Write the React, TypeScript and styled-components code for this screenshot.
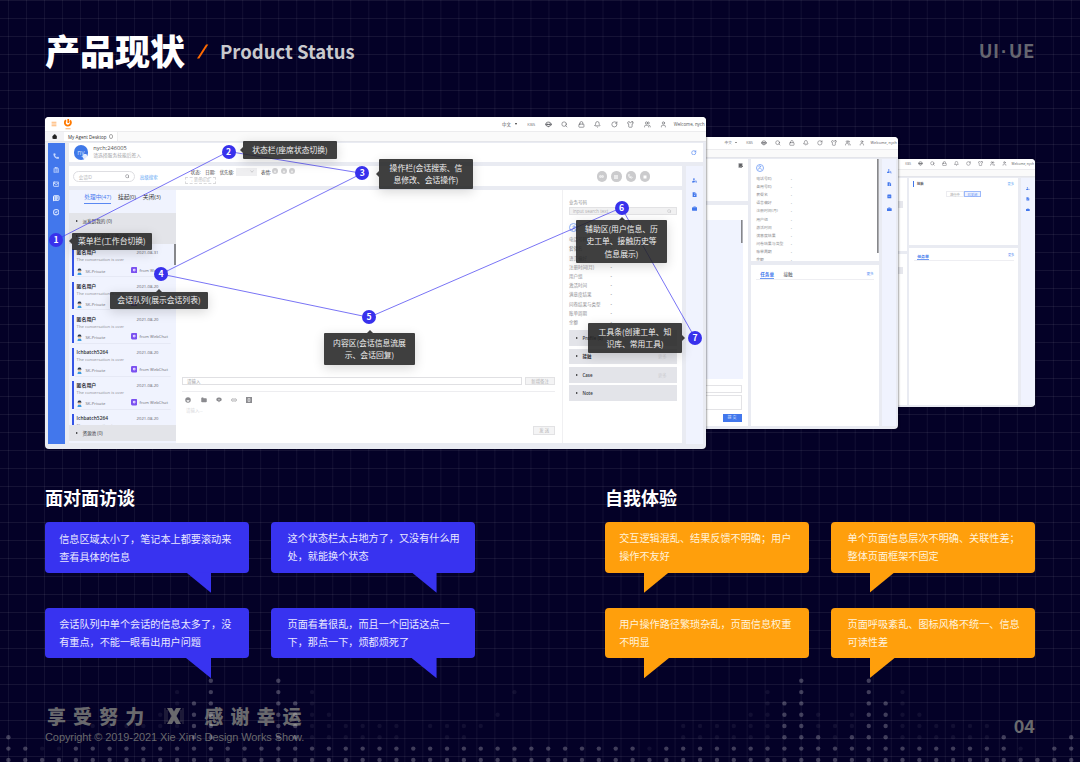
import React from "react";
import styled, { createGlobalStyle, css } from "styled-components";
import {
  Bell,
  CircleCheck,
  ClipboardList,
  Folder,
  House,
  Link2,
  Lock,
  Mail,
  Menu,
  MessageSquareText,
  Phone,
  RotateCw,
  Search,
  Shirt,
  User,
  Users,
} from "lucide-react";

const cjk = `"Noto Sans CJK SC", sans-serif`;
const ui = `"Open Sans", "Noto Sans CJK SC", sans-serif`;

const GlobalStyle = createGlobalStyle`
  * {
    box-sizing: border-box;
  }
  body {
    margin: 0;
    background: #040127;
  }
`;

const Page = styled.main`
  position: relative;
  display: flex;
  flex-direction: column;
  width: 1080px;
  height: 762px;
  padding: 0 45px;
  overflow: hidden;
  font-family: ${cjk};
  background-color: #040127;
  background-image: linear-gradient(rgba(255, 255, 255, 0.07) 1px, transparent 1px),
    linear-gradient(90deg, rgba(255, 255, 255, 0.06) 1px, transparent 1px);
  background-size: 18.02px 18px;
  background-position: 8px 0;
`;

const DotLayer = styled.svg`
  position: absolute;
  left: 0;
  top: 0;
  pointer-events: none;
`;

/* ---------- header ---------- */

const Header = styled.header`
  display: flex;
  align-items: center;
  height: 117px;
  padding-bottom: 14px;
`;

const Title = styled.h1`
  margin: -3px 0 0;
  width: 152px;
  font-size: 35px;
  line-height: 50px;
  font-weight: 900;
  color: #fff;
  white-space: nowrap;
`;

const Slash = styled.svg`
  margin-right: 11px;
`;

const SubTitle = styled.span`
  flex: 1;
  margin-top: -2px;
  font-size: 18.5px;
  font-weight: 700;
  color: #c9c9cd;
`;

const Brand = styled.span`
  margin-top: -3px;
  font-size: 18.5px;
  font-weight: 700;
  color: #666670;
  letter-spacing: 0.5px;
  i {
    margin: 0 1.2px;
    font-family: "Liberation Sans", sans-serif;
    font-style: normal;
  }
`;

/* ---------- mock windows ---------- */

const Stage = styled.section`
  position: relative;
  height: 332px;
`;

const Windows = styled.div`
  display: flex;
  align-items: center;
  height: 332px;
  font-family: ${ui};
`;

const Window = styled.div<{ $w: number; $h: number; $left?: boolean; $z: number }>`
  position: relative;
  z-index: ${(p) => p.$z};
  flex: none;
  display: flex;
  flex-direction: column;
  width: ${(p) => p.$w}px;
  height: ${(p) => p.$h}px;
  overflow: hidden;
  border-radius: ${(p) => (p.$left ? "4px" : "0 4px 4px 0")};
  background: #e9ebf2;
  box-shadow: 1px 0 2px rgba(0, 0, 0, 0.35);
`;

const TopBar = styled.div<{ $h: number }>`
  flex: none;
  display: flex;
  align-items: center;
  justify-content: space-between;
  height: ${(p) => p.$h}px;
  background: #fff;
`;

const TopIcons = styled.div<{ $s: number }>`
  display: flex;
  align-items: center;
  margin-left: auto;
  margin-right: ${(p) => 1.6 * p.$s}px;
  font-size: ${(p) => 4.4 * p.$s}px;
  color: #55565c;
  white-space: nowrap;
  svg {
    flex: none;
    display: block;
    width: ${(p) => 6.8 * p.$s}px;
    height: ${(p) => 6.8 * p.$s}px;
    margin-right: ${(p) => 9.7 * p.$s}px;
  }
`;

const Lang = styled.span<{ $s: number }>`
  display: flex;
  align-items: center;
  gap: ${(p) => 4 * p.$s}px;
  margin-right: ${(p) => 10.5 * p.$s}px;
  &::after {
    content: "";
    border: ${(p) => 1.6 * p.$s}px solid transparent;
    border-top: ${(p) => 2.2 * p.$s}px solid #333;
    border-bottom: 0;
  }
`;

const Kbs = styled.span<{ $s: number }>`
  width: ${(p) => 17.5 * p.$s}px;
  color: #77787d;
  font-size: ${(p) => 4.3 * p.$s}px;
`;

const Welcome = styled.span<{ $s: number }>`
  width: ${(p) => 31 * p.$s}px;
  margin-left: ${(p) => -3 * p.$s}px;
`;

const TabBar = styled.div<{ $h: number }>`
  flex: none;
  display: flex;
  height: ${(p) => p.$h}px;
  background: #fafafa;
  border-top: 0.5px solid #ececee;
  border-bottom: 1px solid #e4e5ea;
`;

const HomeTab = styled.div`
  display: flex;
  align-items: center;
  justify-content: center;
  width: 18.5px;
  background: #f3f3f6;
`;

const Tab = styled.div`
  display: flex;
  align-items: center;
  justify-content: space-between;
  width: 54.5px;
  padding: 0 4px 0 4.5px;
  background: #fff;
  border-right: 1px solid #eee;
  font-size: 4.55px;
  color: #333;
  white-space: nowrap;
`;

const Ring = styled.i`
  width: 4.4px;
  height: 4.4px;
  border: 0.6px solid #aaa;
  border-radius: 50%;
`;

const Logo = styled.div`
  display: flex;
  align-items: center;
  gap: 7.5px;
  padding-left: 5.5px;
`;

const Desk = styled.div`
  flex: 1;
  min-height: 0;
  display: grid;
  grid-template-columns: 16.5px 613.3px 16.3px;
  grid-template-rows: 19.6px 19.6px minmax(0, 1fr);
  column-gap: 4.3px;
  row-gap: 4px;
  padding: 1px 3px 4.5px 3px;
`;

const NavRail = styled.nav`
  grid-row: 1 / 4;
  display: flex;
  flex-direction: column;
  align-items: center;
  gap: 7.7px;
  padding-top: 10px;
  background: #4277ec;
  color: #cddcff;
`;

const Card = styled.div`
  background: #fff;
`;

const AgentCard = styled(Card)`
  grid-column: 2 / 4;
  display: flex;
  align-items: center;
  padding: 0 6px 0 5px;
`;

const Avatar = styled.span`
  display: flex;
  align-items: center;
  justify-content: center;
  width: 14.4px;
  height: 14.4px;
  margin-right: 5px;
  border-radius: 50%;
  background: radial-gradient(circle at 11px 11.5px, #e3ebff 0 2.3px, #3f78e8 2.8px);
  color: #cfe0ff;
  font-size: 6.5px;
`;

const AgentText = styled.div`
  flex: 1;
  display: flex;
  flex-direction: column;
  font-size: 5.7px;
  line-height: 7px;
  color: #555;
  small {
    font-size: 4.8px;
    color: #a2a2a6;
  }
`;

const FilterCard = styled(Card)`
  display: flex;
  align-items: center;
  padding: 1px 0 0 4px;
  font-size: 4.4px;
  line-height: 6px;
  color: #444;
`;

const SearchPill = styled.div`
  display: flex;
  align-items: center;
  justify-content: space-between;
  width: 62.5px;
  height: 11.5px;
  padding: 0 5px;
  border: 0.6px solid #dedee2;
  border-radius: 6px;
  color: #b5b5b8;
`;

const BlueLink = styled.span<{ $size?: number }>`
  color: #63a8f5;
  font-size: ${(p) => p.$size || 4.5}px;
`;

const SearchMore = styled(BlueLink)`
  margin-left: 4.5px;
`;

const Filters = styled.div`
  display: flex;
  flex-direction: column;
  gap: 1px;
  width: 412px;
  margin: -1.5px 0 0 27px;
`;

const FilterLine = styled.div`
  display: flex;
  align-items: center;
  gap: 4.5px;
  height: 8px;
  padding-left: 6px;
`;

const FakeSelect = styled.i`
  display: flex;
  align-items: center;
  justify-content: flex-end;
  width: 21px;
  height: 8px;
  margin: 0 0 0 -3px;
  padding-right: 3px;
  background: #efeff1;
`;

const Smileys = styled.span`
  display: flex;
  gap: 2.2px;
  margin: -2px 0 0 -3px;
  i {
    width: 6px;
    height: 6px;
    border-radius: 50%;
    background: radial-gradient(circle at 3px 3.6px, #ececec 0.8px, #cfcfd1 1.4px);
  }
`;

const AddTag = styled.span`
  width: 31px;
  height: 6.8px;
  border: 0.6px dashed #dadadc;
  color: #c3c3c5;
  font-size: 4px;
  line-height: 5.5px;
  text-align: center;
`;

const RoundButtons = styled.div`
  display: flex;
  gap: 4px;
  i {
    display: flex;
    align-items: center;
    justify-content: center;
    width: 10.4px;
    height: 10.4px;
    border-radius: 50%;
    background: #cbcbcd;
    color: #fff;
  }
`;

const ToolRail = styled.div<{ $s: number; $gap: number }>`
  display: flex;
  flex-direction: column;
  align-items: center;
  gap: ${(p) => p.$gap}px;
  padding-top: ${(p) => 11.5 * p.$s}px;
  background: #f0f3fe;
  svg {
    flex: none;
    width: ${(p) => 5.2 * p.$s}px;
    height: ${(p) => 5.2 * p.$s}px;
  }
`;

const MainToolRail = styled(ToolRail)`
  grid-row: 2 / 4;
  grid-column: 3;
`;

const Workspace = styled.div`
  grid-column: 2;
  display: grid;
  grid-template-columns: 107.3px 387px 1fr;
  min-height: 0;
  background: #fff;
  margin-bottom: 1.5px;
`;

const Queue = styled.div`
  display: flex;
  flex-direction: column;
  min-height: 0;
  padding-bottom: 2.2px;
  background: #f0f3fe;
`;

const QueueTabs = styled.div`
  flex: none;
  display: flex;
  gap: 6.8px;
  height: 23px;
  padding: 4px 0 0 15.5px;
  font-size: 5.7px;
  line-height: 7.4px;
  color: #333;
  white-space: nowrap;
  span {
    height: 10.6px;
  }
  span:first-child {
    color: #4a7cf0;
    border-bottom: 1px solid #5a88f2;
  }
`;

const Group = styled.div`
  flex: none;
  display: flex;
  align-items: center;
  gap: 4.6px;
  height: 15.6px;
  padding-left: 7px;
  background: #e3e4e9;
  color: #37383d;
  font-size: 4.6px;
  &::before {
    content: "";
    border: 1.3px solid transparent;
    border-left: 2.1px solid #222;
    border-right: 0;
  }
`;

const QueueList = styled.div`
  flex: 1;
  min-height: 0;
  overflow: hidden;
  padding-top: 4.8px;
  background: linear-gradient(#86878b, #86878b) no-repeat right 0 top 0 / 2px 21px;
`;

const Chat = styled.div`
  display: grid;
  grid-template-columns: 54.5px 1fr;
  grid-template-rows: 7px 7px 1fr;
  height: 27.5px;
  margin: 0 2px 5.6px 3px;
  padding: 0.6px 0 0 2.8px;
  border-left: 2px solid #3454e6;
  box-shadow: 0 4px 0 -3.4px #dfe3ee;
  font-size: 4.2px;
  line-height: 7px;
  color: #8b8c93;
  white-space: nowrap;
  b {
    font-size: 4.9px;
    font-weight: 600;
    color: #2e2f35;
  }
  time {
    padding-left: 5.5px;
    color: #606168;
  }
  p {
    grid-column: 1 / 3;
    margin: 0;
  }
  span {
    display: flex;
    align-items: center;
    gap: 2px;
    padding-top: 0.5px;
    color: #6f7077;
  }
  span:nth-of-type(1) {
    gap: 2.8px;
    padding-top: 2.5px;
  }
`;

const Conversation = styled.div`
  display: flex;
  flex-direction: column;
  justify-content: flex-end;
  padding: 0 7px 8px 6px;
  border-right: 1px solid #f0f0f2;
  font-size: 4.4px;
  line-height: 7px;
  color: #a5a5a8;
`;

const NoteLine = styled.div`
  display: grid;
  grid-template-columns: 1fr 30px;
  gap: 3px;
  padding-bottom: 6px;
  border-bottom: 0.6px solid #ededf0;
  div {
    height: 8.4px;
    padding-left: 4px;
    border: 0.6px solid #e0e0e3;
  }
`;

const GreyButton = styled.span<{ $w?: number }>`
  align-self: flex-end;
  width: ${(p) => p.$w || 30}px;
  height: 8.4px;
  border: 0.6px solid #e2e2e4;
  background: #f4f4f5;
  color: #b4b4b7;
  text-align: center;
`;

const EditorIcons = styled.div`
  display: flex;
  gap: 9.2px;
  padding: 4.5px 0 4.5px 3.3px;
  color: #8b8b8f;
`;

const Placeholder = styled.div`
  height: 19.4px;
  padding-left: 4px;
  color: #dadadd;
`;

const Aside = styled.aside`
  display: flex;
  flex-direction: column;
  padding: 8.5px 5.4px 0 5.8px;
  font-size: 4.5px;
  line-height: 8px;
  color: #8f8f93;
`;

const AsideSearch = styled.div`
  flex: none;
  display: flex;
  align-items: center;
  justify-content: space-between;
  height: 8px;
  margin: 0.5px 0 8px;
  padding: 0 4px 0 3px;
  border: 0.6px solid #e2e2e4;
  background: #f1f1f2;
  color: #b0b0b3;
`;

const Fields = styled.dl<{ $row: number; $label: number }>`
  display: grid;
  grid-template-columns: ${(p) => p.$label}px 1fr;
  grid-auto-rows: ${(p) => p.$row}px;
  margin: 2.8px 0 0;
  line-height: ${(p) => p.$row}px;
  white-space: nowrap;
  dt,
  dd {
    margin: 0;
  }
  dd {
    color: #444;
  }
`;

const Folds = styled.div`
  display: flex;
  flex-direction: column;
  gap: 2.7px;
  margin-top: 3px;
  ${Group} {
    font-weight: 600;
    font-size: 4.4px;
  }
`;

const MoreText = styled.span`
  margin-left: auto;
  padding-right: 10px;
  font-weight: 400;
  color: #ceced2;
`;

const Person = styled.i<{ $d: number }>`
  flex: none;
  display: flex;
  align-items: center;
  justify-content: center;
  width: ${(p) => p.$d}px;
  height: ${(p) => p.$d}px;
  border: 0.6px solid #8db0f8;
  border-radius: 50%;
  color: #6e9bf5;
`;

/* window behind, middle */

const MidBody = styled.div`
  flex: 1;
  min-height: 0;
  display: grid;
  grid-template-columns: 41.3px 127.6px 14px;
  column-gap: 3.6px;
  padding: 1px 0 3.5px;
`;

const Column = styled.div<{ $rows: string; $gap: number }>`
  display: grid;
  grid-template-rows: ${(p) => p.$rows};
  grid-template-columns: minmax(0, 1fr);
  gap: ${(p) => p.$gap}px;
  min-height: 0;
`;

const GridCard = styled(Card)`
  display: flex;
  justify-content: flex-end;
  padding: 4.5px 5px 0 0;
`;

const FormCard = styled(Card)`
  display: flex;
  flex-direction: column;
  padding: 15.5px 5px 4px 0;
`;

const BlueArea = styled.div`
  height: 158.5px;
  background: linear-gradient(#86878b, #86878b) no-repeat right 0 top 0 / 1.6px 23px, #f0f3fe;
`;

const FieldBox = styled.div<{ $h: number; $mt: number }>`
  height: ${(p) => p.$h}px;
  margin: ${(p) => p.$mt}px 1px 0 0;
  border: 0.7px solid #e3e3e6;
  border-left: 0;
`;

const Submit = styled.span`
  align-self: flex-end;
  width: 19px;
  height: 8px;
  margin: 4px 1px 0 0;
  background: #4277ec;
  color: #dfe8ff;
  font-size: 4px;
  line-height: 8px;
  text-align: center;
`;

const InfoCard = styled(Card)`
  overflow: hidden;
  padding: 5.2px 5px 0;
  font-size: 3.9px;
  color: #8f8f93;
  background: linear-gradient(#86878b, #86878b) no-repeat right 0 top 0 / 1.7px 94px, #fff;
`;

const TaskCard = styled(Card)<{ $s: number }>`
  padding: ${(p) => 5 * p.$s}px ${(p) => 5 * p.$s}px 0;
`;

const TaskTabs = styled.div<{ $s: number }>`
  display: flex;
  gap: ${(p) => 9.5 * p.$s}px;
  height: ${(p) => 10 * p.$s}px;
  padding: 0 0 0 ${(p) => 4 * p.$s}px;
  border-bottom: 0.6px solid #eeeef2;
  font-size: ${(p) => 4.6 * p.$s}px;
  line-height: ${(p) => 8.5 * p.$s}px;
  color: #55565c;
  b {
    color: #4277ec;
    border-bottom: 1px solid #6f9af5;
  }
  em {
    margin-left: auto;
    font-style: normal;
    font-size: 0.8em;
    line-height: ${(p) => 7 * p.$s}px;
    color: #5d8ff3;
  }
`;

/* window behind, far right */

const FarBody = styled.div`
  flex: 1;
  min-height: 0;
  display: grid;
  grid-template-columns: 8.6px 109px 14px;
  column-gap: 2.6px;
  padding: 1.5px 0 2px;
`;

const Chip = styled.i<{ $top: number }>`
  display: block;
  width: 4.3px;
  height: 7px;
  margin-top: ${(p) => p.$top}px;
  background: #e6e7ed;
`;

const ContactCard = styled(Card)`
  padding: 3px 4.5px 0 4px;
  font-size: 3.3px;
  line-height: 6px;
  color: #55565c;
`;

const ContactHead = styled.div`
  display: flex;
  justify-content: space-between;
  b {
    padding-left: 2.4px;
    border-left: 0.8px solid #4277ec;
  }
`;

const Segments = styled.div`
  display: flex;
  justify-content: center;
  margin: 3.5px 0 0 0;
  span {
    width: 17.5px;
    height: 6.5px;
    border: 0.6px solid #ececf0;
    text-align: center;
    line-height: 5px;
    color: #999;
  }
  span:last-child {
    border-color: #9bb8fa;
    background: #edf2ff;
    color: #5d8ff3;
  }
`;

/* ---------- annotations over the windows ---------- */

const Lines = styled.svg`
  position: absolute;
  z-index: 5;
  left: 0;
  top: 0;
`;

const Marker = styled.span<{ $x: number; $y: number }>`
  position: absolute;
  z-index: 7;
  left: ${(p) => p.$x - 7}px;
  top: ${(p) => p.$y - 7}px;
  width: 14px;
  height: 14px;
  border-radius: 50%;
  background: #3831ec;
  color: #fff;
  font-size: 8.6px;
  font-weight: 700;
  line-height: 13.4px;
  text-align: center;
`;

type Side = "left" | "right" | "top";

const arrows = {
  left: css`
    left: -3px;
    top: 50%;
    margin-top: -3px;
    border-right-color: rgba(34, 34, 34, 0.87);
    border-left-width: 0;
  `,
  right: css`
    right: -3px;
    top: 50%;
    margin-top: -3px;
    border-left-color: rgba(34, 34, 34, 0.87);
    border-right-width: 0;
  `,
  top: css`
    left: 50%;
    top: -3px;
    margin-left: -3px;
    border-bottom-color: rgba(34, 34, 34, 0.87);
    border-top-width: 0;
  `,
};

const Tip = styled.div<{ $x: number; $y: number; $w: number; $h: number; $side: Side }>`
  position: absolute;
  z-index: 6;
  left: ${(p) => p.$x}px;
  top: ${(p) => p.$y}px;
  width: ${(p) => p.$w}px;
  height: ${(p) => p.$h}px;
  display: flex;
  flex-direction: column;
  align-items: center;
  justify-content: center;
  border-radius: 1px;
  background: rgba(34, 34, 34, 0.87);
  box-shadow: 0 3px 12px rgba(0, 0, 0, 0.16);
  color: #efefef;
  font-size: 7.8px;
  line-height: 12.4px;
  white-space: nowrap;
  &::after {
    content: "";
    position: absolute;
    border: 3px solid transparent;
    ${(p) => arrows[p.$side]}
  }
`;

/* ---------- findings ---------- */

const Findings = styled.div`
  display: flex;
  gap: 130px;
  padding-top: 35px;
`;

const FindingGroup = styled.section`
  width: 430px;
`;

const GroupTitle = styled.h2`
  margin: 0 0 12.3px;
  font-size: 18px;
  line-height: 26px;
  font-weight: 700;
  color: #fff;
`;

const Bubbles = styled.div`
  display: grid;
  grid-template-columns: 204.2px 204.2px;
  column-gap: 21.4px;
  row-gap: 35px;
`;

const Bubble = styled.p<{ $tone: "blue" | "orange"; $x?: number; $y?: number }>`
  position: relative;
  height: 50.6px;
  margin: 0;
  padding: ${(p) => p.$y || 7}px 0 0 ${(p) => p.$x || 14.2}px;
  border-radius: 4px;
  background: ${(p) => (p.$tone === "blue" ? "#3833f0" : "#ff9f0c")};
  color: ${(p) => (p.$tone === "blue" ? "#e9e8ff" : "#fff3dc")};
  font-size: 10.13px;
  line-height: 18.1px;
  white-space: nowrap;
  &::after {
    content: "";
    position: absolute;
    top: 50px;
    left: ${(p) => (p.$tone === "blue" ? 141 : 39)}px;
    width: 25px;
    height: 20.4px;
    background: inherit;
    clip-path: ${(p) =>
      p.$tone === "blue" ? "polygon(0 0, 100% 0, 100% 100%)" : "polygon(0 0, 100% 0, 0 100%)"};
  }
`;

/* ---------- footer ---------- */

const Footer = styled.footer`
  display: flex;
  align-items: center;
  justify-content: space-between;
  margin-top: 45px;
  color: #69696d;
`;

const Motto = styled.div`
  display: flex;
  gap: 20px;
  margin-left: 2px;
  font-size: 19px;
  font-weight: 900;
  line-height: 25px;
  white-space: nowrap;
  span {
    letter-spacing: 7.1px;
    margin-right: -7.1px;
  }
`;

const Cross = styled.svg`
  margin-top: 4.5px;
`;

const Copyright = styled.small`
  display: block;
  margin-top: 2px;
  font-family: "Liberation Sans", sans-serif;
  font-size: 11px;
  line-height: 14px;
  letter-spacing: -0.09px;
`;

const PageNo = styled.span`
  padding-top: 2px;
  font-size: 18px;
  font-weight: 700;
  line-height: 24px;
`;

const range = (a: number, b: number) => Array.from({ length: b - a + 1 }, (_, i) => a + i);

const dotRows = [
  { y: 680.8, on: [12, 16, 47, 51], dim: [] },
  { y: 692.1, on: [12, 16, 47, 51], dim: [10, 18, 30, 45, 53] },
  { y: 703.4, on: [11, 12, 16, 17, 46, 47, 51, 52], dim: [10, 18, 45, 53] },
  { y: 714.7, on: [11, 12, 16, 17, 46, 47, 51, 52], dim: [9, 18, 19, 29, 44, 45, 48, 50, 53, 54] },
  {
    y: 726,
    on: [11, 12, 16, 17, 46, 47, 51, 52],
    dim: [...range(5, 10), ...range(18, 23), ...range(25, 28), ...range(40, 45), 48, 49, 50, ...range(53, 58)],
  },
  {
    y: 737.3,
    on: [0, 11, 12, 16, 17, 46, 47, 48, 50, 51, 52, 59, 63],
    dim: [...range(18, 23), 26, 27, ...range(40, 45), 49, ...range(53, 58)],
  },
  { y: 748.6, on: [0, 1, ...range(4, 37), ...range(39, 59), 62, 63], dim: [2, 3, 38, 60] },
  { y: 759.9, on: range(0, 63), dim: [] },
];

const Dots = () => (
  <DotLayer width="1080" height="762" fill="#fff">
    {dotRows.map((row) => (
      <g key={row.y}>
        {row.on.map((c) => (
          <circle key={c} cx={8.4 + c * 16.87} cy={row.y} r="2.2" opacity="0.24" />
        ))}
        {row.dim.map((c) => (
          <circle key={c} cx={8.4 + c * 16.87} cy={row.y} r="2.2" opacity="0.06" />
        ))}
      </g>
    ))}
  </DotLayer>
);

const Robot = () => (
  <svg viewBox="0 0 24 24" fill="none" stroke="currentColor" strokeWidth="2.6">
    <rect x="4" y="4" width="16" height="15" rx="6" />
    <path d="M1 9v6M23 9v6M4 12h16M12 19v3" />
    <circle cx="9" cy="12" r="1.5" />
    <circle cx="15" cy="12" r="1.5" />
  </svg>
);

const HeaderTools = ({ s, lang = true }: { s: number; lang?: boolean }) => (
  <TopIcons $s={s}>
    {lang && <Lang $s={s}>中文</Lang>}
    <Kbs $s={s}>KBS</Kbs>
    <Robot />
    <Search />
    <Lock />
    <Bell />
    <RotateCw />
    <Shirt />
    <Users />
    <User />
    <Welcome $s={s}>Welcome, nych</Welcome>
  </TopIcons>
);

const AgentIcon = () => (
  <svg viewBox="0 0 24 24" fill="#4277ec">
    <circle cx="9" cy="5" r="4" />
    <path d="M0 21c0-7 4-10 9-10 3 0 4 1 5 3l-3 7z" />
    <circle cx="18" cy="16" r="3.4" fill="none" stroke="#4277ec" strokeWidth="2.4" />
    <path d="M20 18l4 5" stroke="#4277ec" strokeWidth="2.4" />
  </svg>
);

const DocIcon = () => (
  <svg viewBox="0 0 24 24" fill="#4277ec">
    <path d="M3 1h11l7 7v15H3z" />
    <path d="M13 3v6h6" stroke="#f0f3fe" strokeWidth="1.8" fill="none" />
    <circle cx="12" cy="15" r="2.8" fill="#f0f3fe" />
  </svg>
);

const CalendarIcon = () => (
  <svg viewBox="0 0 24 24" fill="#4277ec">
    <rect x="2" y="3" width="20" height="19" rx="2" />
    <path d="M6 15l4-4 4 3 4-4" stroke="#f0f3fe" strokeWidth="2" fill="none" />
  </svg>
);

const BagIcon = () => (
  <svg viewBox="0 0 24 24" fill="#4277ec">
    <rect x="0" y="6" width="24" height="16" rx="2" />
    <path d="M8 6V3h8v3" stroke="#4277ec" strokeWidth="2.4" fill="none" />
  </svg>
);

const FormIcon = () => (
  <svg width="5" height="5" viewBox="0 0 10 10">
    <path d="M1 0.5h8v6l-3 3H1z" fill="#8a8b90" />
    <path d="M2.5 3h5M2.5 5h5M2.5 7h2" stroke="#333" strokeWidth="1" />
    <path d="M6 9.5l3.5-3.5" stroke="#333" strokeWidth="1.4" />
  </svg>
);

const AgentFace = () => (
  <svg width="5" height="7" viewBox="0 0 10 14">
    <path d="M1 14c0-4 2-5 4-5s4 1 4 5z" fill="#3b9be0" />
    <circle cx="5" cy="6" r="3.4" fill="#f4cda6" />
    <path d="M1.2 5.5C1 2 3 .8 5 .8s4 1.2 3.8 4.7C7 4.5 4 4.5 1.2 5.5z" fill="#23364f" />
  </svg>
);

const WebChatIcon = () => (
  <svg width="6.4" height="6.4" viewBox="0 0 12 12">
    <rect width="12" height="12" rx="2.5" fill="#7a50f0" />
    <circle cx="6" cy="5.8" r="2.6" fill="#e6dcff" />
    <circle cx="6" cy="5.8" r="0.8" fill="#7a50f0" />
  </svg>
);

const chats = [
  { name: "匿名用户", date: "2021-08-31" },
  { name: "匿名用户", date: "2021-08-20" },
  { name: "匿名用户", date: "2021-08-20" },
  { name: "lchbatch5264", date: "2021-08-20" },
  { name: "匿名用户", date: "2021-08-20" },
  { name: "lchbatch5264", date: "2021-08-20" },
];

const fields = [
  "电话号码",
  "套餐名",
  "语言偏好",
  "注册时间(月)",
  "用户组",
  "激活时间",
  "满意度结果",
  "问卷结果与类型",
  "账单周期",
  "余额",
];

const FieldList = ({ items, row, label }: { items: string[]; row: number; label: number }) => (
  <Fields $row={row} $label={label}>
    {items.map((item) => (
      <React.Fragment key={item}>
        <dt>{item}</dt>
        <dd>-</dd>
      </React.Fragment>
    ))}
  </Fields>
);

const MainWindow = () => (
  <Window $w={661.3} $h={331.6} $left $z={3}>
    <TopBar $h={14.2}>
      <Logo>
        <Menu size={6} color="#ff9a3c" strokeWidth={3} />
        <svg width="8" height="11" viewBox="0 0 16 22">
          <path d="M4 2.5A6 6 0 1 0 12 3" fill="none" stroke="#ff7a00" strokeWidth="3.8" />
          <path d="M8.5 0v8" stroke="#ff7a00" strokeWidth="3.4" />
          <path d="M3 19.5h10" stroke="#ffb066" strokeWidth="2" />
        </svg>
      </Logo>
      <HeaderTools s={1} />
    </TopBar>
    <TabBar $h={10.3}>
      <HomeTab>
        <House size={5.4} color="#222" fill="#222" />
      </HomeTab>
      <Tab>
        My Agent Desktop
        <Ring />
      </Tab>
    </TabBar>
    <Desk>
      <NavRail>
        <Phone size={6.4} fill="currentColor" strokeWidth={1} />
        <ClipboardList size={6.4} strokeWidth={3} />
        <Mail size={6.4} strokeWidth={3.6} />
        <MessageSquareText size={6.6} color="#fff" strokeWidth={3.6} />
        <CircleCheck size={6.4} strokeWidth={4} />
      </NavRail>
      <AgentCard>
        <Avatar>ny</Avatar>
        <AgentText>
          nych;246005
          <small>请选择服务技能后签入</small>
        </AgentText>
        <RotateCw size={5.5} color="#5d8ff3" strokeWidth={3} />
      </AgentCard>
      <FilterCard>
        <SearchPill>
          会话ID
          <Search size={4.8} color="#77787d" strokeWidth={2.6} />
        </SearchPill>
        <SearchMore>高级搜索</SearchMore>
        <Filters>
          <FilterLine>
            <span>状态:</span>
            <span>日期:</span>
            <span>优先级:</span>
            <FakeSelect>
              <svg width="4" height="3" viewBox="0 0 8 6">
                <path d="M1 1l3 3.5L7 1" fill="none" stroke="#b5b5b8" strokeWidth="1.2" />
              </svg>
            </FakeSelect>
            <span>表情:</span>
            <Smileys>
              <i />
              <i />
              <i />
            </Smileys>
          </FilterLine>
          <AddTag>+ 新增标签</AddTag>
        </Filters>
        <RoundButtons>
          <i>
            <Link2 size={5} strokeWidth={3.5} />
          </i>
          <i>
            <svg width="4" height="4">
              <path d="M1 0v4M3 0v4" stroke="#fff" strokeWidth="1.2" />
            </svg>
          </i>
          <i>
            <Phone size={4.6} strokeWidth={3.5} />
          </i>
          <i>
            <svg width="4" height="4">
              <rect x="0.5" y="0.5" width="3" height="3" fill="#fff" />
            </svg>
          </i>
        </RoundButtons>
      </FilterCard>
      <MainToolRail $s={1} $gap={8.9}>
        <AgentIcon />
        <DocIcon />
        <BagIcon />
      </MainToolRail>
      <Workspace>
        <Queue>
          <QueueTabs>
            <span>处理中(47)</span>
            <span>挂起(0)</span>
            <span>关闭(3)</span>
          </QueueTabs>
          <Group>派发到我的 (0)</Group>
          <Group>已关闭未创建工单 (46)</Group>
          <QueueList>
            {chats.map((chat, i) => (
              <Chat key={i}>
                <b>{chat.name}</b>
                <time>{chat.date}</time>
                <p>The conversation is over</p>
                <span>
                  <AgentFace />
                  &nbsp;SK-Private
                </span>
                <span>
                  <WebChatIcon />
                  from WebChat
                </span>
              </Chat>
            ))}
          </QueueList>
          <Group>资源池 (0)</Group>
        </Queue>
        <Conversation>
          <NoteLine>
            <div>请输入</div>
            <GreyButton>新增备注</GreyButton>
          </NoteLine>
          <EditorIcons>
            <svg width="6" height="6" viewBox="0 0 12 12">
              <circle cx="6" cy="6" r="5.5" fill="currentColor" />
              <path d="M3 6.5a3 3 0 0 0 6 0z" fill="#fff" />
            </svg>
            <Folder size={6} fill="currentColor" />
            <svg width="6" height="6" viewBox="0 0 12 12">
              <path d="M6 1a5 4 0 0 1 1 8l-1 2-1-2a5 4 0 0 1 1-8z" fill="currentColor" />
              <path d="M4 5.5h4" stroke="#fff" />
            </svg>
            <Link2 size={6} strokeWidth={2.4} />
            <svg width="6" height="6" viewBox="0 0 12 12">
              <rect width="12" height="12" fill="currentColor" />
              <path d="M4 3h4v6H4zM4 6h4" stroke="#fff" fill="none" />
            </svg>
          </EditorIcons>
          <Placeholder>请输入...</Placeholder>
          <GreyButton $w={22}>发 送</GreyButton>
        </Conversation>
        <Aside>
          业务号码
          <AsideSearch>
            input search text
            <Search size={4.5} />
          </AsideSearch>
          <Person $d={9.5}>
            <User size={6} strokeWidth={2.6} />
          </Person>
          <FieldList items={fields} row={9.23} label={41.5} />
          <Folds>
            <Group>Profile (0)</Group>
            <Group>
              接触<MoreText>更多</MoreText>
            </Group>
            <Group>
              Case<MoreText>更多</MoreText>
            </Group>
            <Group>Note</Group>
          </Folds>
        </Aside>
      </Workspace>
    </Desk>
  </Window>
);

const MiddleWindow = () => (
  <Window $w={192} $h={292} $z={2}>
    <TopBar $h={11.8}>
      <HeaderTools s={0.85} />
    </TopBar>
    <TabBar $h={9.2} />
    <MidBody>
      <Column $rows="42px 1fr" $gap={4}>
        <GridCard>
          <FormIcon />
        </GridCard>
        <FormCard>
          <BlueArea />
          <FieldBox $h={7.6} $mt={6} />
          <FieldBox $h={14.5} $mt={2.8} />
          <Submit>提 交</Submit>
        </FormCard>
      </Column>
      <Column $rows="102px 1fr" $gap={4}>
        <InfoCard>
          <Person $d={8}>
            <User size={5.5} strokeWidth={2.6} />
          </Person>
          <FieldList items={["电话号码", "备用号码", ...fields.slice(1)]} row={8.13} label={34.5} />
        </InfoCard>
        <TaskCard $s={1}>
          <TaskTabs $s={1}>
            <b>任务单</b>
            接触
            <em>更多</em>
          </TaskTabs>
        </TaskCard>
      </Column>
      <ToolRail $s={0.9} $gap={7.8}>
        <AgentIcon />
        <DocIcon />
        <CalendarIcon />
        <BagIcon />
      </ToolRail>
    </MidBody>
  </Window>
);

const FarWindow = () => (
  <Window $w={136.8} $h={248} $z={1}>
    <TopBar $h={9.8}>
      <HeaderTools s={0.725} lang={false} />
    </TopBar>
    <TabBar $h={8} />
    <FarBody>
      <Column $rows="73px 1fr" $gap={3}>
        <Card>
          <Chip $top={23} />
        </Card>
        <Card>
          <Chip $top={12.5} />
        </Card>
      </Column>
      <Column $rows="66.5px 1fr" $gap={3.5}>
        <ContactCard>
          <ContactHead>
            <b>接触</b>
            <BlueLink $size={3.2}>更多</BlueLink>
          </ContactHead>
          <Segments>
            <span>进行中</span>
            <span>已关闭</span>
          </Segments>
        </ContactCard>
        <TaskCard $s={0.85}>
          <TaskTabs $s={0.85}>
            <b>任务单</b>
            <em>更多</em>
          </TaskTabs>
        </TaskCard>
      </Column>
      <ToolRail $s={0.72} $gap={6.8}>
        <AgentIcon />
        <DocIcon />
        <BagIcon />
      </ToolRail>
    </FarBody>
  </Window>
);

const markers = [
  [11, 123],
  [183.5, 34.5],
  [317.3, 56.3],
  [116, 157],
  [324, 200.3],
  [576.5, 90.7],
  [650, 221],
];

const tips: { x: number; y: number; w: number; h: number; side: Side; lines: string[] }[] = [
  { x: 27, y: 115.5, w: 79.7, h: 17.4, side: "left", lines: ["菜单栏(工作台切换)"] },
  { x: 198, y: 24, w: 94, h: 17.6, side: "left", lines: ["状态栏(座席状态切换)"] },
  { x: 334, y: 42, w: 94, h: 30, side: "left", lines: ["操作栏(会话搜索、信", "息修改、会话操作)"] },
  { x: 65.3, y: 174.7, w: 97.4, h: 17.7, side: "top", lines: ["会话队列(展示会话列表)"] },
  { x: 279, y: 216, w: 91, h: 32.4, side: "top", lines: ["内容区(会话信息流展", "示、会话回复)"] },
  { x: 531, y: 103, w: 91, h: 42.7, side: "top", lines: ["辅助区(用户信息、历", "史工单、接触历史等", "信息展示)"] },
  { x: 543, y: 206.3, w: 94, h: 30.2, side: "right", lines: ["工具条(创建工单、知", "识库、常用工具)"] },
];

const Annotations = () => (
  <>
    <Lines width="990" height="332">
      <polyline
        points={markers.map((m) => m.join(",")).join(" ")}
        fill="none"
        stroke="#3f38f0"
        strokeWidth="0.7"
      />
    </Lines>
    {tips.map((tip) => (
      <Tip key={tip.lines[0]} $x={tip.x} $y={tip.y} $w={tip.w} $h={tip.h} $side={tip.side}>
        {tip.lines.map((line) => (
          <span key={line}>{line}</span>
        ))}
      </Tip>
    ))}
    {markers.map(([x, y], i) => (
      <Marker key={i} $x={x} $y={y}>
        {i + 1}
      </Marker>
    ))}
  </>
);

const App: React.FC = () => {
  return (
    <Page>
      <GlobalStyle />
      <Dots />
      <Header>
        <Title>产品现状</Title>
        <Slash width="12" height="15" viewBox="0 0 12 15">
          <path d="M0 14.5L9 0.5h2.3L2.3 14.5z" fill="#ff6a00" />
        </Slash>
        <SubTitle>Product Status</SubTitle>
        <Brand>
          UI<i>·</i>UE
        </Brand>
      </Header>
      <Stage>
        <Windows>
          <MainWindow />
          <MiddleWindow />
          <FarWindow />
        </Windows>
        <Annotations />
      </Stage>
      <Findings>
        <FindingGroup>
          <GroupTitle>面对面访谈</GroupTitle>
          <Bubbles>
            <Bubble $tone="blue" $y={8}>
              信息区域太小了，笔记本上都要滚动来
              <br />
              查看具体的信息
            </Bubble>
            <Bubble $tone="blue" $x={17}>
              这个状态栏太占地方了，又没有什么用
              <br />
              处，就能换个状态
            </Bubble>
            <Bubble $tone="blue">
              会话队列中单个会话的信息太多了，没
              <br />
              有重点，不能一眼看出用户问题
            </Bubble>
            <Bubble $tone="blue" $x={17}>
              页面看着很乱，而且一个回话这点一
              <br />
              下，那点一下，烦都烦死了
            </Bubble>
          </Bubbles>
        </FindingGroup>
        <FindingGroup>
          <GroupTitle>自我体验</GroupTitle>
          <Bubbles>
            <Bubble $tone="orange">
              交互逻辑混乱、结果反馈不明确；用户
              <br />
              操作不友好
            </Bubble>
            <Bubble $tone="orange" $x={17}>
              单个页面信息层次不明确、关联性差；
              <br />
              整体页面框架不固定
            </Bubble>
            <Bubble $tone="orange">
              用户操作路径繁琐杂乱，页面信息权重
              <br />
              不明显
            </Bubble>
            <Bubble $tone="orange" $x={17}>
              页面呼吸紊乱、图标风格不统一、信息
              <br />
              可读性差
            </Bubble>
          </Bubbles>
        </FindingGroup>
      </Findings>
      <Footer>
        <div>
          <Motto>
            <span>享受努力</span>
            <Cross width="20" height="16" viewBox="0 0 20 16">
              <path d="M3 0h5l9 16h-5zM12 0h5L8 16H3z" fill="currentColor" />
              <path d="M1 0v16M19 0v16M3 2v12M17 2v12" stroke="currentColor" strokeOpacity="0.5" />
            </Cross>
            <span>感谢幸运</span>
          </Motto>
          <Copyright>Copyright © 2019-2021 Xie Xin's Design Works Show.</Copyright>
        </div>
        <PageNo>04</PageNo>
      </Footer>
    </Page>
  );
};

export default App;
